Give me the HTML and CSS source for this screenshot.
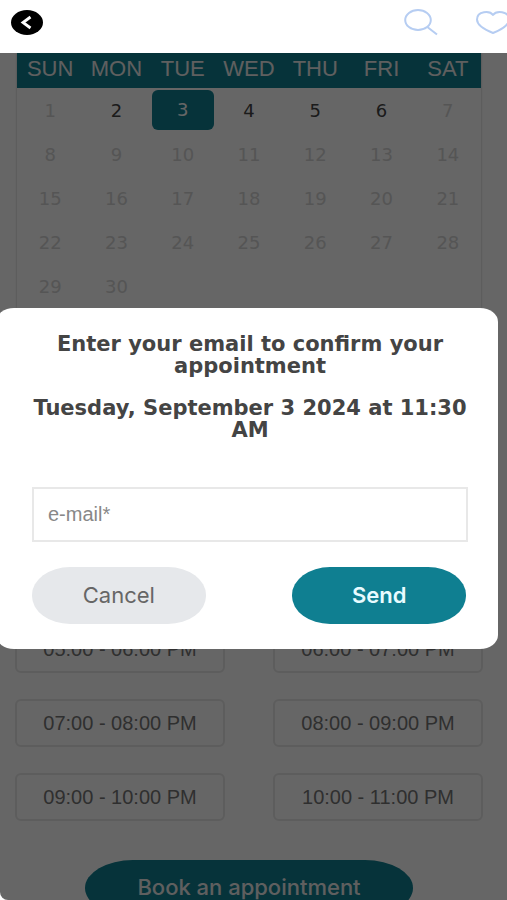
FILE: index.html
```html
<!DOCTYPE html>
<html lang="en">
<head>
<meta charset="utf-8">
<meta name="viewport" content="width=device-width, initial-scale=1">
<title>Book an appointment</title>
<link rel="stylesheet" href="styles.css">
</head>
<body>
<div class="app">
  <header class="topbar">
    <button class="icon-button" type="button" aria-label="Back">
      <svg width="34" height="28" viewBox="0 0 34 28" fill="none"><ellipse cx="17" cy="14.500" rx="16" ry="12.500" fill="#000"/><path d="M20.500 9 13 14.500l7.500 5.500" stroke="#fff" stroke-width="2.800"/></svg>
    </button>
    <div class="actions">
      <button class="icon-button" type="button" aria-label="Search">
        <svg width="34" height="28" viewBox="0 0 34 28" fill="none" stroke="#b6cdf2" stroke-width="2"><ellipse cx="14" cy="12" rx="12.800" ry="10"/><path d="m23 18.800 10 7.700"/></svg>
      </button>
      <button class="icon-button" type="button" aria-label="Favourites">
        <svg width="34" height="28" viewBox="0 0 34 28" fill="none" stroke="#b6cdf2" stroke-width="2" stroke-linejoin="round"><path d="M17 7C14 2.500 1 2.500 1 11.500c0 5 6 9.500 16 13.500 10-4 16-8.500 16-13.500C33 2.500 20 2.500 17 7Z"/></svg>
      </button>
    </div>
  </header>
  <main class="page">
    <div class="booking">
      <table class="calendar">
        <thead><tr><th scope="col">SUN</th><th scope="col">MON</th><th scope="col">TUE</th><th scope="col">WED</th><th scope="col">THU</th><th scope="col">FRI</th><th scope="col">SAT</th></tr></thead>
        <tbody>
          <tr><td>1</td><td class="open">2</td><td class="selected"><span>3</span></td><td class="open">4</td><td class="open">5</td><td class="open">6</td><td>7</td></tr>
          <tr><td>8</td><td>9</td><td>10</td><td>11</td><td>12</td><td>13</td><td>14</td></tr>
          <tr><td>15</td><td>16</td><td>17</td><td>18</td><td>19</td><td>20</td><td>21</td></tr>
          <tr><td>22</td><td>23</td><td>24</td><td>25</td><td>26</td><td>27</td><td>28</td></tr>
          <tr><td>29</td><td>30</td><td></td><td></td><td></td><td></td><td></td></tr>
        </tbody>
      </table>
      <div class="slots">
        <button class="slot" type="button">05:00 - 06:00 PM</button>
        <button class="slot" type="button">06:00 - 07:00 PM</button>
        <button class="slot" type="button">07:00 - 08:00 PM</button>
        <button class="slot" type="button">08:00 - 09:00 PM</button>
        <button class="slot" type="button">09:00 - 10:00 PM</button>
        <button class="slot" type="button">10:00 - 11:00 PM</button>
      </div>
      <button class="book" type="button">Book an appointment</button>
    </div>
    <div class="overlay">
      <form class="dialog" role="dialog" aria-labelledby="dialog-title">
        <h2 id="dialog-title">Enter your email to confirm your appointment</h2>
        <p class="when">Tuesday, September 3 2024 at 11:30 AM</p>
        <input class="email" type="email" placeholder="e-mail*" aria-label="e-mail" required>
        <div class="buttons">
          <button class="pill cancel" type="button">Cancel</button>
          <button class="pill send" type="submit">Send</button>
        </div>
      </form>
    </div>
  </main>
</div>
</body>
</html>
```
FILE: styles.css
```css
* {
  box-sizing: border-box;
}

body {
  margin: 0;
  background: #fff;
  font-family: "Liberation Sans", Arial, sans-serif;
  font-size: 20px;
}

button,
input {
  font: inherit;
}

.app {
  display: flex;
  flex-direction: column;
  height: 100vh;
  overflow: hidden;
}

.topbar {
  display: flex;
  flex: none;
  justify-content: space-between;
  height: 53px;
  padding: 8px 0 0 10px;
}

.actions {
  display: flex;
  gap: 38px;
  margin-right: -3px;
}

.icon-button {
  display: block;
  height: 28px;
  padding: 0;
  border: 0;
  background: none;
}

.icon-button svg {
  display: block;
}

.page {
  position: relative;
  flex: 1;
  min-height: 0;
  overflow: hidden;
  border-bottom-left-radius: 8px;
}

.booking {
  display: flex;
  flex-direction: column;
  padding: 0 24px 0 15px;
}

.calendar {
  width: calc(100% - 4px);
  margin: 0 2px;
  border-spacing: 0;
  table-layout: fixed;
  box-shadow: 0 0 2px #bbb;
}

.calendar th,
.calendar td {
  padding: 0;
  text-align: center;
}

.calendar th {
  height: 35px;
  padding-bottom: 4px;
  background: #0f7f91;
  color: #eee;
  font-size: 22px;
  font-weight: 400;
}

.calendar td {
  height: 44px;
  color: #d4d4d4;
  font-family: "DejaVu Sans", sans-serif;
  font-size: 18px;
}

.calendar .open {
  color: #444;
}

.calendar .selected {
  color: #fff;
}

.selected span {
  display: block;
  margin: 0 2px;
  border-radius: 6px;
  background: #0f7f91;
  line-height: 40px;
}

.slots {
  display: grid;
  grid-template-columns: 1fr 1fr;
  gap: 26px 48px;
  margin-top: 317px;
}

.slot {
  height: 48px;
  padding: 0;
  border: 2px solid #e8e8e8;
  border-radius: 6px;
  background: #fff;
  color: #777;
}

.book {
  align-self: center;
  width: 70%;
  height: 56px;
  margin-top: 39px;
  padding: 0 0 2px;
  border: 0;
  border-radius: 48px / 28px;
  background: #0f7f91;
  color: #eee;
  font-family: Inter, "Liberation Sans", sans-serif;
  font-size: 22px;
  font-weight: 500;
}

.overlay {
  position: absolute;
  inset: 0;
  display: flex;
  align-items: flex-start;
  padding: 255px 9px 0 0;
  background: rgba(0, 0, 0, 0.6);
}

.dialog {
  flex: 1;
  margin-left: -4px;
  padding: 25px 30px 25px 36px;
  border-radius: 18px / 14px;
  background: #fff;
  color: #444;
  text-align: center;
}

.dialog h2,
.when {
  margin: 0 0 20px;
  font-family: "DejaVu Sans", sans-serif;
  font-size: 21px;
  font-weight: 700;
  line-height: 22px;
}

.dialog .when {
  margin-bottom: 46px;
}

.email {
  display: block;
  width: 100%;
  height: 55px;
  padding: 0 14px;
  border: 2px solid #e8e8e8;
  background: #fff;
}

.email::placeholder {
  color: #888;
  opacity: 1;
}

.buttons {
  display: flex;
  justify-content: space-between;
  margin-top: 25px;
  padding-right: 2px;
}

.pill {
  width: 40%;
  height: 57px;
  padding: 0 0 2px;
  border: 0;
  border-radius: 38px / 28px;
  font-family: Inter, "Liberation Sans", sans-serif;
  font-size: 22px;
}

.cancel {
  background: #e6e8eb;
  color: #666;
}

.send {
  background: #0f7f91;
  color: #e8fbff;
  font-weight: 600;
}
```
